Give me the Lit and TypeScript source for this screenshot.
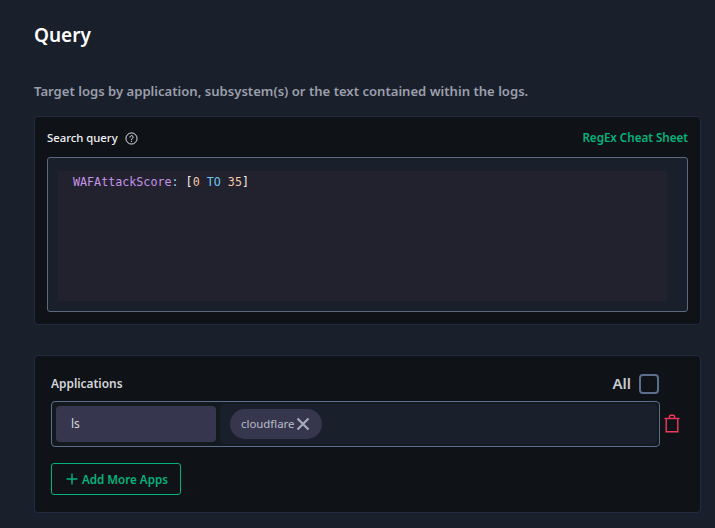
import { LitElement, html, css } from "lit";
import { customElement } from "lit/decorators.js";

@customElement("app-root")
export class AppRoot extends LitElement {
  static styles = css`
    :host {
      display: block;
      width: 715px;
      height: 528px;
      overflow: hidden;
      background: #1a202b;
      font-family: "Noto Sans", "Lato", sans-serif;
      color: #fff;
      box-sizing: border-box;
    }
    * { box-sizing: border-box; }
    .page {
      padding: 22px 14px 0 34px;
      display: flex;
      flex-direction: column;
    }
    h1 {
      margin: 0;
      font-size: 19px;
      line-height: 26px;
      font-weight: 600;
      color: #fff;
    }
    .sub {
      margin: 33px 0 0;
      font-size: 13.1px;
      line-height: 20px;
      font-weight: 600;
      color: #9b9fab;
    }
    .card {
      background: #0f1217;
      border: 1px solid #232b42;
      border-radius: 4px;
    }
    .query {
      margin-top: 15px;
      height: 209px;
      padding: 12px;
      display: flex;
      flex-direction: column;
    }
    .qhead {
      display: flex;
      align-items: center;
      height: 18px;
      padding-bottom: 2px;
      font-size: 11.3px;
      font-weight: 500;
      color: #f2f3f5;
    }
    .qhead svg { margin: 2px 0 0 7px; }
    .cheat {
      margin-left: auto;
      color: #05b27a;
      font-weight: 600;
      font-size: 11.6px;
    }
    .editor {
      margin-top: 10px;
      height: 155px;
      background: #1a202b;
      border: 1px solid #5b6880;
      border-radius: 3px;
      padding: 13px 20px 10px 10px;
    }
    .code {
      height: 100%;
      background: #22222e;
      padding: 3px 0 0 15px;
      font-family: "DejaVu Sans Mono", monospace;
      font-size: 11.7px;
      line-height: 16px;
      white-space: pre;
      color: #f0f0f0;
    }
    .k { color: #c792ea; }
    .p { color: #89ddff; }
    .op { color: #6cc5f0; }
    .n { color: #f5c8a8; }
    .apps {
      margin-top: 30px;
      height: 158px;
      padding: 16px 40px 0 16px;
    }
    .ahead {
      display: flex;
      align-items: center;
      height: 23px;
    }
    .ahead .lbl {
      margin-bottom: 2px;
      font-size: 11.9px;
      font-weight: 600;
      color: #d4d6da;
    }
    .all {
      margin-left: auto;
      margin-right: 1px;
      display: flex;
      align-items: center;
      gap: 8px;
      font-size: 15px;
      font-weight: 600;
      color: #c9cbd0;
    }
    .all-text { margin-bottom: 2px; }
    .check {
      width: 20px;
      height: 20px;
      border: 2px solid #5b6f8c;
      border-radius: 4px;
    }
    .row {
      position: relative;
      margin-top: 6px;
      height: 46px;
      border: 1px solid #5b6f8c;
      border-radius: 4px;
      background: #14181f;
      padding: 4px;
      display: flex;
      align-items: stretch;
    }
    .is {
      width: 160px;
      background: #37364f;
      border-radius: 4px;
      padding: 0 0 1px 15px;
      display: flex;
      align-items: center;
      font-size: 12px;
      color: #d4d6da;
    }
    .tags {
      flex: 1;
      margin: -2px -2px -2px 4px;
      border-radius: 4px;
      background: #1a202b;
      display: flex;
      align-items: center;
      padding-left: 10px;
    }
    .tag {
      height: 30px;
      width: 92px;
      border-radius: 15px;
      background: #37364f;
      padding: 0 0 1px 11px;
      display: flex;
      align-items: center;
      font-size: 11.4px;
      color: #b9bcc8;
    }
    .tag svg { margin: 1px 0 0 1px; }
    .trash {
      position: absolute;
      right: -21px;
      top: 12px;
    }
    .add {
      margin-top: 16px;
      width: 130px;
      height: 32px;
      border: 1px solid #05b27a;
      border-radius: 3px;
      display: flex;
      align-items: center;
      padding-left: 13px;
      gap: 3px;
      font-size: 11.6px;
      font-weight: 600;
      color: #05b27a;
    }
  `;

  render() {
    return html`
      <div class="page">
        <h1>Query</h1>
        <p class="sub">Target logs by application, subsystem(s) or the text contained within the logs.</p>
        <section class="card query">
          <div class="qhead">
            <span>Search query</span>
            <svg width="13" height="13" viewBox="0 0 14 14" fill="none" stroke="#f2f3f5" stroke-width="1">
              <circle cx="7" cy="7" r="6"></circle>
              <path d="M5.3 5.6a1.7 1.7 0 1 1 2.6 1.4c-.6.4-.9.7-.9 1.4" stroke-linecap="round"></path>
              <circle cx="7" cy="10.2" r=".6" fill="#f2f3f5" stroke="none"></circle>
            </svg>
            <span class="cheat">RegEx Cheat Sheet</span>
          </div>
          <div class="editor">
            <div class="code"><span class="k">WAFAttackScore</span><span class="p">:</span> [<span class="n">0</span> <span class="op">TO</span> <span class="n">35</span>]</div>
          </div>
        </section>
        <section class="card apps">
          <div class="ahead">
            <span class="lbl">Applications</span>
            <span class="all"><span class="all-text">All</span><span class="check"></span></span>
          </div>
          <div class="row">
            <div class="is">ls</div>
            <div class="tags">
              <div class="tag">
                cloudflare
                <svg width="14" height="14" viewBox="0 0 14 14" fill="none" stroke="#a6aaba" stroke-width="2.2">
                  <path d="M1.5 1.5l11 11M12.5 1.5l-11 11"></path>
                </svg>
              </div>
            </div>
            <svg class="trash" width="16" height="19" viewBox="0 0 16 19" fill="none" stroke="#f0395f" stroke-width="1.4">
              <path d="M.5 4.5h15"></path>
              <path d="M5.5 4.5V2.5c0-.8.6-1.3 1.3-1.3h2.4c.7 0 1.3.5 1.3 1.3v2"></path>
              <path d="M2.2 4.5v13.3h11.6V4.5"></path>
            </svg>
          </div>
          <div class="add">
            <svg width="14" height="14" viewBox="0 0 14 14" fill="none" stroke="#05b27a" stroke-width="1.4">
              <path d="M7 1.5v11M1.5 7h11"></path>
            </svg>
            <span>Add More Apps</span>
          </div>
        </section>
      </div>
    `;
  }
}
